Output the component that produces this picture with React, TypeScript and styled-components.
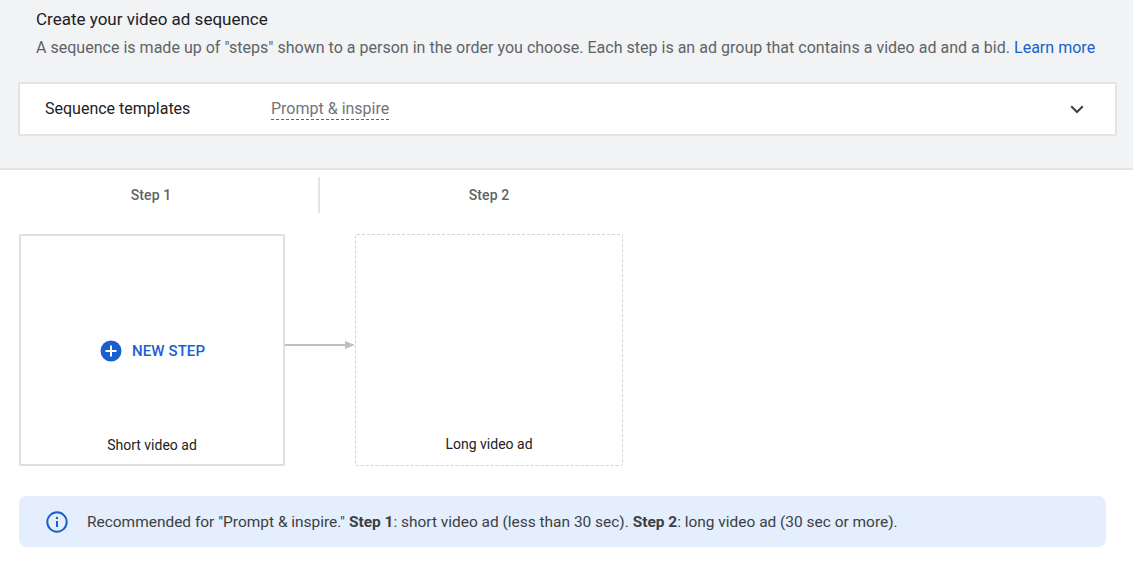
import React from "react";
import styled, { createGlobalStyle } from "styled-components";

const Global = createGlobalStyle`
  html, body { margin: 0; padding: 0; background: #fff; }
  body { font-family: Roboto, "Liberation Sans", sans-serif; -webkit-font-smoothing: antialiased; }
  * { box-sizing: border-box; }
`;

const Page = styled.div`
  width: 1133px;
  height: 562px;
  overflow: hidden;
  background: #fff;
`;

const Header = styled.header`
  height: 170px;
  background: #f1f3f4;
  border-bottom: 2px solid #e3e4e6;
  padding: 9px 16px 0 18px;
`;

const Title = styled.h2`
  margin: 0 0 0 18px;
  font-size: 17px;
  line-height: 20px;
  font-weight: 400;
  color: #202124;
`;

const Description = styled.p`
  margin: 9px 0 0 18px;
  font-size: 16px;
  line-height: 20px;
  letter-spacing: 0.019px;
  color: #5f6368;
  white-space: nowrap;
`;

const LearnMore = styled.a`
  color: #1a5fd0;
  text-decoration: none;
`;

const TemplateCard = styled.div`
  margin-top: 24px;
  height: 54px;
  background: #fff;
  border: 2px solid #e2e3e5;
  border-radius: 2px;
  display: flex;
  align-items: center;
  padding: 0 31px 0 25px;
`;

const TemplateLabel = styled.span`
  width: 226px;
  font-size: 16px;
  color: #202124;
  margin-top: -1px;
`;

const TemplateValue = styled.span`
  font-size: 16px;
  line-height: 20px;
  color: #70757a;
  border-bottom: 1px dashed #5f6368;
`;

const Chevron = styled.svg`
  margin-left: auto;
  width: 14px;
  height: 9px;
`;

const StepHeader = styled.div`
  height: 64px;
  padding-top: 7px;
  display: flex;
`;

const StepTab = styled.div<{ $width: number; $divider?: boolean; $inset?: number }>`
  width: ${(p) => p.$width}px;
  height: 36px;
  display: flex;
  align-items: center;
  justify-content: center;
  padding-right: ${(p) => p.$inset ?? 0}px;
  font-size: 14px;
  font-weight: 500;
  letter-spacing: 0.1px;
  color: #5f6368;
  border-right: ${(p) => (p.$divider ? "2px solid #e3e4e6" : "none")};
`;

const Flow = styled.div`
  display: flex;
  padding-left: 19px;
`;

const StepCard = styled.div<{ $dashed?: boolean; $width: number }>`
  position: relative;
  flex: none;
  width: ${(p) => p.$width}px;
  height: 232px;
  border: ${(p) => (p.$dashed ? "1px dashed #d2d4d7" : "2px solid #dedfe1")};
  border-radius: 2px;
`;

const NewStep = styled.button`
  position: absolute;
  left: 79px;
  top: 104px;
  display: flex;
  align-items: center;
  gap: 10px;
  padding: 0;
  border: 0;
  background: none;
  font: 500 15px/22px Roboto, sans-serif;
  letter-spacing: 0.1px;
  color: #1a5fd0;
`;

const CardLabel = styled.span<{ $bottom: number }>`
  position: absolute;
  left: 0;
  right: 0;
  bottom: ${(p) => p.$bottom}px;
  text-align: center;
  font-size: 14px;
  line-height: 18px;
  color: #202124;
`;

const Arrow = styled.svg`
  width: 70px;
  height: 10px;
  margin: 106px 0 0 0;
  flex: none;
`;

const Notice = styled.div`
  margin: 30px 0 0 19px;
  width: 1087px;
  height: 51px;
  background: #e4eefd;
  border-radius: 8px;
  display: flex;
  align-items: center;
  padding-left: 27px;
  gap: 19px;
  font-size: 15.46px;
  color: #3c4043;
  white-space: nowrap;
`;

const Strong = styled.strong`
  font-weight: 700;
`;

export default function App() {
  return (
    <Page>
      <Global />
      <Header>
        <Title>Create your video ad sequence</Title>
        <Description>
          A sequence is made up of "steps" shown to a person in the order you choose. Each step is an ad group that contains a video ad and a bid. <LearnMore href="#">Learn more</LearnMore>
        </Description>
        <TemplateCard>
          <TemplateLabel>Sequence templates</TemplateLabel>
          <TemplateValue>Prompt &amp; inspire</TemplateValue>
          <Chevron viewBox="0 0 14 9" aria-hidden="true">
            <path d="M1.2 1.2 7 7l5.8-5.8" fill="none" stroke="#3c4043" strokeWidth="2" />
          </Chevron>
        </TemplateCard>
      </Header>
      <StepHeader>
        <StepTab $width={320} $divider $inset={16}>Step 1</StepTab>
        <StepTab $width={338}>Step 2</StepTab>
      </StepHeader>
      <Flow>
        <StepCard $width={266}>
          <NewStep>
            <svg width="22" height="22" viewBox="0 0 22 22" aria-hidden="true">
              <circle cx="11" cy="11" r="10.5" fill="#1a5fd0" />
              <path d="M11 5.5v11M5.5 11h11" stroke="#fff" strokeWidth="2" />
            </svg>
            NEW STEP
          </NewStep>
          <CardLabel $bottom={10}>Short video ad</CardLabel>
        </StepCard>
        <Arrow viewBox="0 0 70 10" aria-hidden="true">
          <path d="M0 5h62" stroke="#bdc1c6" strokeWidth="2" />
          <path d="M60 1l10 4-10 4z" fill="#bdc1c6" />
        </Arrow>
        <StepCard $dashed $width={268}>
          <CardLabel $bottom={12}>Long video ad</CardLabel>
        </StepCard>
      </Flow>
      <Notice>
        <svg width="22" height="22" viewBox="0 0 22 22" aria-hidden="true">
          <circle cx="11" cy="11" r="9.7" fill="none" stroke="#1a5fd0" strokeWidth="2" />
          <path d="M11 10v6" stroke="#1a5fd0" strokeWidth="2" />
          <circle cx="11" cy="7" r="1.2" fill="#1a5fd0" />
        </svg>
        <span>
          Recommended for "Prompt &amp; inspire." <Strong>Step 1</Strong>: short video ad (less than 30 sec). <Strong>Step 2</Strong>: long video ad (30 sec or more).
        </span>
      </Notice>
    </Page>
  );
}
